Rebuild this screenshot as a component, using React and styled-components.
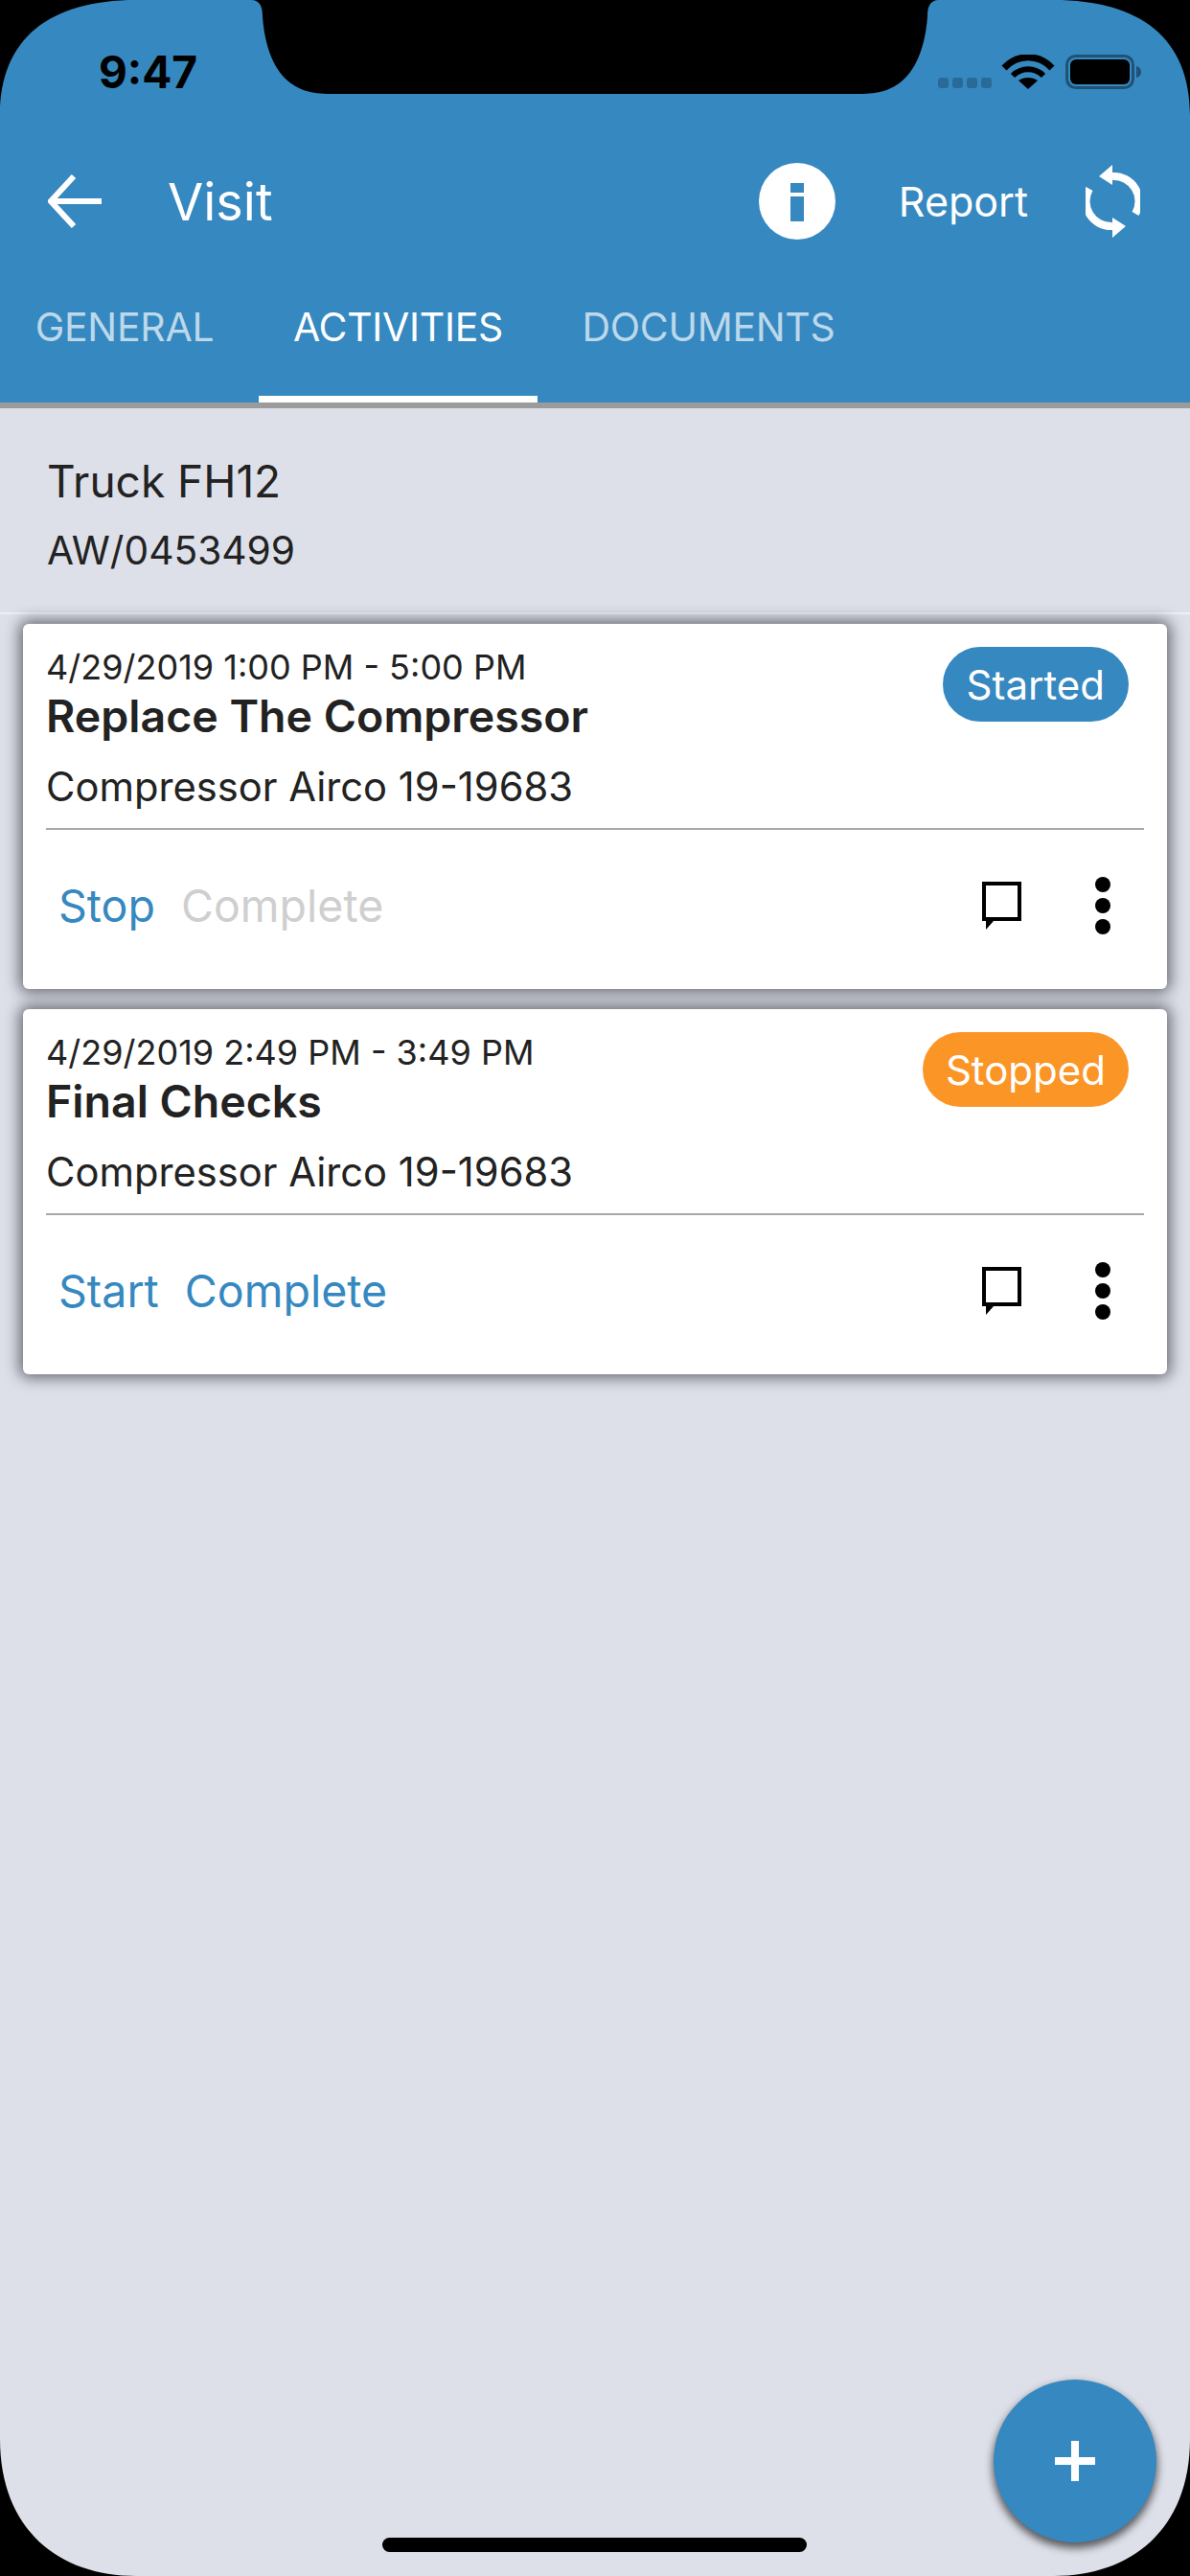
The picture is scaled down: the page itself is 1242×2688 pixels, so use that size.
import React from "react";
import styled, { createGlobalStyle } from "styled-components";

const BLUE = "#3688c0";

const Global = createGlobalStyle`
  html, body { margin: 0; padding: 0; background: #000; }
  * { box-sizing: border-box; }
  body { font-family: Inter, "Noto Sans", "Liberation Sans", sans-serif; }
`;

const Phone = styled.div`
  position: relative;
  width: 1242px;
  height: 2688px;
  overflow: hidden;
  background: #dde0e9;
  display: flex;
  flex-direction: column;
`;

const Mask = styled.svg`
  position: absolute;
  inset: 0;
  pointer-events: none;
`;

const Header = styled.header`
  background: ${BLUE};
  height: 426px;
  border-bottom: 6px solid #9b9b9b;
  display: flex;
  flex-direction: column;
  flex: none;
`;

const StatusBar = styled.div`
  height: 150px;
  padding: 50px 50px 0 103px;
  display: flex;
  align-items: flex-start;
  justify-content: space-between;
`;

const Clock = styled.span`
  font-size: 46px;
  line-height: 50px;
  font-weight: 700;
  color: #000;
`;

const StatusIcons = styled.div`
  display: flex;
  align-items: flex-start;
  margin-top: 7px;
`;

const Toolbar = styled.div`
  height: 120px;
  display: flex;
  align-items: center;
  padding: 0 52px 0 50px;
`;

const Title = styled.h1`
  margin: 0 0 0 69px;
  font-size: 54px;
  font-weight: 400;
  color: #fff;
  flex: 1;
`;

const ReportLabel = styled.span`
  margin: 0 60px 0 66px;
  font-size: 43px;
  color: #fff;
`;

const Tabs = styled.nav`
  display: flex;
  flex: 1;
  align-items: stretch;
`;

const Tab = styled.div`
  width: ${(p) => p.$w}px;
  display: flex;
  align-items: center;
  justify-content: center;
  padding: 0 ${(p) => p.$endPad || 0}px 2px 0;
  font-size: 41px;
  font-weight: 400;
  letter-spacing: -0.3px;
  color: ${(p) => (p.$active ? "#fff" : "#bcd8ea")};
  border-bottom: 7px solid ${(p) => (p.$active ? "#fff" : "transparent")};
`;

const Subject = styled.section`
  height: 215px;
  padding: 50px 49px 0;
  border-bottom: 2px solid #eef0f4;
  flex: none;
`;

const SubjectName = styled.div`
  font-size: 46px;
  line-height: 52px;
  color: #222;
`;

const SubjectCode = styled.div`
  margin-top: 22px;
  font-size: 40.7px;
  line-height: 50px;
  color: #222;
`;

const List = styled.div`
  padding: 10px 24px 0 24px;
  display: flex;
  flex-direction: column;
  gap: 21px;
`;

const Card = styled.article`
  height: 381px;
  background: #fff;
  border-radius: 6px;
  box-shadow: 0 0 15px 4px rgba(30, 32, 40, 0.6);
  padding: 24px 24px 0;
  display: flex;
  flex-direction: column;
`;

const CardTop = styled.div`
  display: flex;
  justify-content: space-between;
  align-items: flex-start;
  height: 191px;
  border-bottom: 2px solid #a8a8a8;
`;

const CardText = styled.div`
  display: flex;
  flex-direction: column;
`;

const DateLine = styled.div`
  font-size: 36px;
  line-height: 42px;
  color: #222;
`;

const TaskName = styled.div`
  font-size: 46.5px;
  line-height: 60px;
  font-weight: 600;
  color: #222;
`;

const Asset = styled.div`
  margin-top: 19px;
  font-size: 41.7px;
  line-height: 50px;
  color: #222;
`;

const Badge = styled.div`
  height: 78px;
  padding: 0 ${(p) => p.$pad}px;
  margin: 0 16px 0 0;
  border-radius: 39px;
  background: ${(p) => p.$color};
  color: #fff;
  font-size: 42px;
  display: flex;
  align-items: center;
`;

const ActionRow = styled.div`
  flex: 1;
  display: flex;
  align-items: center;
  padding: 0 35px 9px 13px;
`;

const ActionLink = styled.span`
  font-size: 46.5px;
  color: ${(p) => (p.$off ? "#cfcfcf" : BLUE)};
  margin-right: 27px;
`;

const Spacer = styled.div`
  flex: 1;
`;

const MoreDots = styled.div`
  margin-left: 76px;
  width: 16px;
  display: flex;
  flex-direction: column;
  gap: 6px;
`;

const Dot = styled.span`
  width: 16px;
  height: 16px;
  border-radius: 50%;
  background: #000;
`;

const Fab = styled.button`
  position: absolute;
  left: 1037px;
  top: 2483px;
  width: 170px;
  height: 170px;
  border: 0;
  padding: 0;
  border-radius: 50%;
  background: ${BLUE};
  box-shadow: 0 5px 8px 1px rgba(0, 0, 0, 0.6);
  display: flex;
  align-items: center;
  justify-content: center;
`;

const HomeBar = styled.div`
  position: absolute;
  left: 399px;
  top: 2648px;
  width: 443px;
  height: 15px;
  border-radius: 8px;
  background: #000;
`;

const SyncIcon = () => (
  <svg width="57" height="76" viewBox="0 0 57 76" fill="none">
    <path d="M28 12A26 26 0 0 1 52 51M28 64A26 26 0 0 1 4 25" stroke="#fff" strokeWidth="8" />
    <path d="M14 12L28 0V21ZM42 64L28 76V55Z" fill="#fff" />
  </svg>
);

const BackIcon = () => (
  <svg width="56" height="56" viewBox="0 0 56 56" fill="none" stroke="#fff" strokeWidth="6">
    <path d="M56 28H4M27 2L3 28L27 54" />
  </svg>
);

const InfoIcon = () => (
  <svg width="80" height="80" viewBox="0 0 80 80">
    <circle cx="40" cy="40" r="40" fill="#fff" />
    <rect x="33" y="21" width="14" height="10" fill={BLUE} />
    <rect x="33" y="35" width="14" height="26" fill={BLUE} />
  </svg>
);

const Chat = () => (
  <svg width="42" height="50" viewBox="0 0 42 50">
    <path d="M0 0H41V41H12L4 50V41H0Z M4 4V37H37V4Z" fillRule="evenodd" fill="#000" />
  </svg>
);

const Plus = () => (
  <svg width="42" height="42" viewBox="0 0 42 42" fill="#fff">
    <path d="M17 0H25V17H42V25H25V42H17V25H0V17H17Z" />
  </svg>
);

const StatusGlyphs = () => (
  <svg width="213" height="36" viewBox="0 0 213 36">
    <g fill="#2a6a98">
      <rect x="0" y="24" width="11" height="11" rx="3" />
      <rect x="15" y="24" width="11" height="11" rx="3" />
      <rect x="30" y="24" width="11" height="11" rx="3" />
      <rect x="45" y="24" width="11" height="11" rx="3" />
    </g>
    <path d="M69 14C83 -1 105 -1 119 14" fill="none" stroke="#000" strokeWidth="7" />
    <path d="M78 22C87 13 101 13 110 22" fill="none" stroke="#000" strokeWidth="6" />
    <path d="M94 36L84 27C90 23 98 23 104 27Z" fill="#000" />
    <rect x="134.500" y="1.500" width="69" height="33" rx="9" fill="none" stroke="#1f5275" strokeWidth="3" />
    <rect x="138" y="5" width="62" height="26" rx="6" fill="#000" />
    <path d="M207 12C211 13 212 16 212 18C212 20 211 23 207 24Z" fill="#1f5275" />
  </svg>
);

const tasks = [
  {
    date: "4/29/2019 1:00 PM - 5:00 PM",
    name: "Replace The Compressor",
    status: "Started",
    color: BLUE,
    pad: 25,
    first: "Stop",
    off: true,
  },
  {
    date: "4/29/2019 2:49 PM - 3:49 PM",
    name: "Final Checks",
    status: "Stopped",
    color: "#fb9526",
    pad: 24,
    first: "Start",
    off: false,
  },
];

export default function App() {
  return (
    <Phone>
      <Global />
      <Header>
        <StatusBar>
          <Clock>9:47</Clock>
          <StatusIcons>
            <StatusGlyphs />
          </StatusIcons>
        </StatusBar>
        <Toolbar>
          <BackIcon />
          <Title>Visit</Title>
          <InfoIcon />
          <ReportLabel>Report</ReportLabel>
          <SyncIcon />
        </Toolbar>
        <Tabs>
          <Tab $w={270} $endPad={10}>GENERAL</Tab>
          <Tab $w={291} $active>ACTIVITIES</Tab>
          <Tab $w={357}>DOCUMENTS</Tab>
        </Tabs>
      </Header>
      <Subject>
        <SubjectName>Truck FH12</SubjectName>
        <SubjectCode>AW/0453499</SubjectCode>
      </Subject>
      <List>
        {tasks.map((t) => (
          <Card key={t.name}>
            <CardTop>
              <CardText>
                <DateLine>{t.date}</DateLine>
                <TaskName>{t.name}</TaskName>
                <Asset>Compressor Airco 19-19683</Asset>
              </CardText>
              <Badge $color={t.color} $pad={t.pad}>{t.status}</Badge>
            </CardTop>
            <ActionRow>
              <ActionLink>{t.first}</ActionLink>
              <ActionLink $off={t.off}>Complete</ActionLink>
              <Spacer />
              <Chat />
              <MoreDots>
                <Dot />
                <Dot />
                <Dot />
              </MoreDots>
            </ActionRow>
          </Card>
        ))}
      </List>
      <Fab aria-label="Add">
        <Plus />
      </Fab>
      <HomeBar />
      <Mask width="1242" height="2688" viewBox="0 0 1242 2688">
        <path
          fill="#000"
          d="M262 0C272 0 274 8 274 17C276 45 284 70 300 84C314 96 328 98 349 98H893C914 98 928 96 942 84C958 70 966 45 968 17C968 8 970 0 980 0Z
             M0 0V120C0 40 52 0 142 0Z
             M1242 0H1100C1190 0 1242 40 1242 120Z
             M0 2688V2545C0 2640 62 2688 142 2688Z
             M1242 2688H1100C1180 2688 1242 2640 1242 2545Z"
        />
      </Mask>
    </Phone>
  );
}
